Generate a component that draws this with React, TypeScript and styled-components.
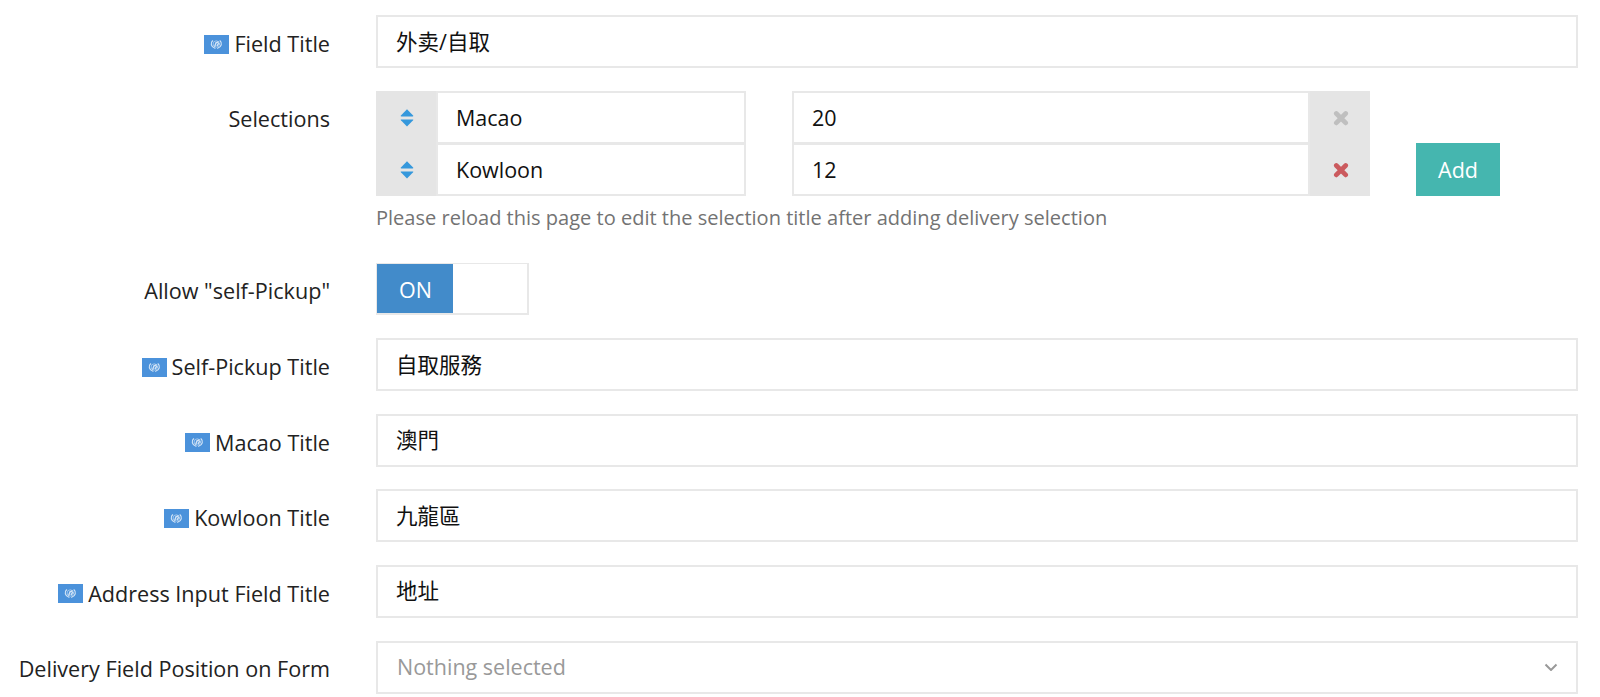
import React, { useState } from "react";
import styled, { createGlobalStyle } from "styled-components";

const GlobalStyle = createGlobalStyle`
  * {
    box-sizing: border-box;
  }
  body {
    margin: 0;
    background: #fff;
    color: #222;
    font-family: "Open Sans", "Noto Sans CJK TC", sans-serif;
    font-size: 21.5px;
  }
`;

const Form = styled.form`
  display: flex;
  flex-direction: column;
  gap: 22.5px;
  width: 1600px;
  height: 697px;
  padding: 15px 22px 0 0;
  overflow: hidden;
`;

const Row = styled.div<{ $height?: number }>`
  display: grid;
  grid-template-columns: 330px 1fr;
  column-gap: 46px;
  flex: none;
  height: ${({ $height }) => $height || 53}px;
`;

const Label = styled.label<{ $offset?: number }>`
  display: flex;
  align-items: center;
  justify-content: flex-end;
  gap: 5px;
  height: 30px;
  margin-top: ${({ $offset }) => $offset || 13}px;
  font-size: 21.6px;
  line-height: 30px;
  white-space: nowrap;
`;

const Input = styled.input<{ $lift?: number }>`
  display: block;
  width: 100%;
  min-width: 0;
  height: 53px;
  padding: 0 18px ${({ $lift = 0 }) => $lift}px;
  border: 2px solid #e8e8e8;
  border-radius: 0;
  outline: none;
  background: #fff;
  color: #111;
  font: inherit;
`;

const SelectionArea = styled.div`
  display: flex;
  flex-direction: column;
`;

const SelectionLine = styled.div`
  display: grid;
  grid-template-columns: 370px 578px 84px;
  column-gap: 46px;
  height: 52px;

  &:nth-child(2) {
    height: 53px;
  }
`;

const InputGroup = styled.div`
  display: flex;
  height: 53px;
`;

const Addon = styled.span`
  display: flex;
  align-items: center;
  justify-content: center;
  flex: none;
  width: 60px;
  padding: 2px 0 0 1px;
  background: #e5e5e5;
`;

const AddButton = styled.button`
  height: 53px;
  padding: 0;
  border: 0;
  background: #45b6af;
  color: #fff;
  font: inherit;
`;

const HelpText = styled.p`
  margin: 7px 0 0;
  color: #737373;
  font-size: 20.04px;
  line-height: 30px;
`;

const Switch = styled.button`
  display: flex;
  width: 153px;
  height: 52px;
  padding: 0;
  border: 2px solid #e8e8e8;
  border-width: 1px 2px 2px 1px;
  background: #fff;
  font: inherit;
`;

const SwitchHandle = styled.span<{ $on: boolean }>`
  width: 76px;
  height: 49px;
  margin-left: ${({ $on }) => ($on ? 0 : 74)}px;
  padding-left: 1px;
  background: ${({ $on }) => ($on ? "#428bca" : "#e5e5e5")};
  color: ${({ $on }) => ($on ? "#fff" : "#333")};
  line-height: 51px;
  text-align: center;
`;

const Select = styled.div`
  display: flex;
  align-items: center;
  justify-content: space-between;
  height: 53px;
  padding: 0 18px 2px 19px;
  border: 2px solid #e8e8e8;
  color: #999;
`;

const FlagIcon = () => (
  <svg width="25" height="19" viewBox="0 0 25 19">
    <path fill="#4b92db" d="M0 0h25v19H0z" />
    <g fill="none" stroke="#fff" strokeLinecap="round" opacity=".75">
      <path strokeWidth="1.2" d="M8.600 5.800C6.200 8 6.900 11.800 11 13.200M16 5.800c2.400 2.200 1.700 6-2.400 7.400" />
      <circle cx="12.300" cy="9" r="3.200" strokeWidth=".6" />
      <path strokeWidth="1.400" d="M10.800 11.200l1.200-3.400 2.200-.8M13.200 10.600l1.200-2" />
    </g>
  </svg>
);

const SortIcon = () => (
  <svg width="14" height="18" viewBox="0 0 14 18" fill="#3598dc">
    <path d="M7 .3l6.100 6.300c.4.500.2.900-.4.900H1.300c-.6 0-.8-.4-.4-.9z" />
    <path d="M7 17.500l6.100-6.200c.4-.5.200-.9-.4-.9H1.300c-.6 0-.8.4-.4.9z" />
  </svg>
);

const RemoveIcon = ({ color }: { color: string }) => (
  <svg width="16" height="16" viewBox="0 0 16 16">
    <path d="M3.300 3.500l9.400 9.400M12.700 3.500l-9.400 9.400" stroke={color} strokeWidth="4.700" strokeLinecap="round" />
  </svg>
);

const ChevronIcon = () => (
  <svg width="14" height="9" viewBox="0 0 14 9">
    <path d="M1.500 2.500L7 8l5.500-5.500" fill="none" stroke="#999" strokeWidth="2" />
  </svg>
);

const selections = [
  { title: "Macao", price: "20" },
  { title: "Kowloon", price: "12" },
];

const titles = [
  { label: "Self-Pickup Title", value: "自取服務" },
  { label: "Macao Title", value: "澳門" },
  { label: "Kowloon Title", value: "九龍區" },
  { label: "Address Input Field Title", value: "地址", height: 53.5 },
];

const App = () => {
  const [selfPickup, setSelfPickup] = useState(true);

  return (
    <>
      <GlobalStyle />
      <Form>
        <Row>
          <Label $offset={14}>
            <FlagIcon />
            Field Title
          </Label>
          <Input $lift={2} lang="zh-Hans" defaultValue="外卖/自取" />
        </Row>
        <Row $height={149.8}>
          <Label>Selections</Label>
          <SelectionArea>
            {selections.map(({ title, price }, index) => (
              <SelectionLine key={title}>
                <InputGroup>
                  <Addon>
                    <SortIcon />
                  </Addon>
                  <Input defaultValue={title} />
                </InputGroup>
                <InputGroup>
                  <Input defaultValue={price} />
                  <Addon>
                    <RemoveIcon color={index === 0 ? "#bfbfbf" : "#cb5a5e"} />
                  </Addon>
                </InputGroup>
                {index === selections.length - 1 && <AddButton type="button">Add</AddButton>}
              </SelectionLine>
            ))}
            <HelpText>Please reload this page to edit the selection title after adding delivery selection</HelpText>
          </SelectionArea>
        </Row>
        <Row>
          <Label>Allow "self-Pickup"</Label>
          <Switch type="button" onClick={() => setSelfPickup(!selfPickup)}>
            <SwitchHandle $on={selfPickup}>{selfPickup ? "ON" : "OFF"}</SwitchHandle>
          </Switch>
        </Row>
        {titles.map(({ label, value, height }) => (
          <Row key={label} $height={height}>
            <Label $offset={14}>
              <FlagIcon />
              {label}
            </Label>
            <Input $lift={3} lang="zh-Hant" defaultValue={value} />
          </Row>
        ))}
        <Row>
          <Label>Delivery Field Position on Form</Label>
          <Select>
            Nothing selected
            <ChevronIcon />
          </Select>
        </Row>
      </Form>
    </>
  );
};

export default App;
